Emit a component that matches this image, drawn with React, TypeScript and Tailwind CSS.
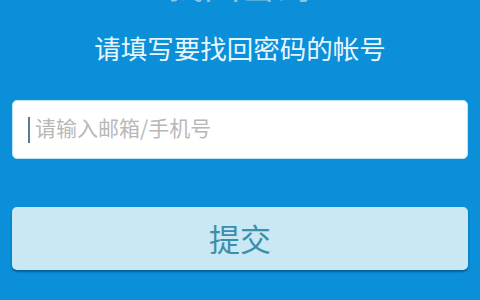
import React from 'react';

const cjk = '"Noto Sans CJK SC", "Noto Sans", sans-serif';

export default function App() {
    return (
        <div
            className="flex h-[300px] w-[480px] flex-col overflow-hidden bg-[#0a8fd8] px-3"
            style={{ fontFamily: cjk }}
        >
            <div className="-mt-[38px] h-[42px] text-center text-[36px] leading-[42px] text-[#8cc4e6]">
                找回密码
            </div>

            <p className="mt-[25px] text-center text-[26.5px] leading-[38px] text-[#e6f6ff]">
                请填写要找回密码的帐号
            </p>

            <div className="mt-[33px] flex h-[59px] items-center rounded-[5px] border border-[#bfe6f7] bg-white px-[15px]">
                <span className="h-[26px] w-[2px] bg-[#5b7a90]" />
                <span className="ml-[5px] mt-[-3px] text-[21px] text-[#b8b8b8]">
                    请输入邮箱/手机号
                </span>
            </div>

            <button className="mt-[48px] flex h-[63px] items-center justify-center rounded-[5px] bg-[#cae7f4] text-[31px] text-[#3b8fa9] shadow-[0_2px_2px_rgba(0,40,80,0.45)]">
                提交
            </button>
        </div>
    );
}
